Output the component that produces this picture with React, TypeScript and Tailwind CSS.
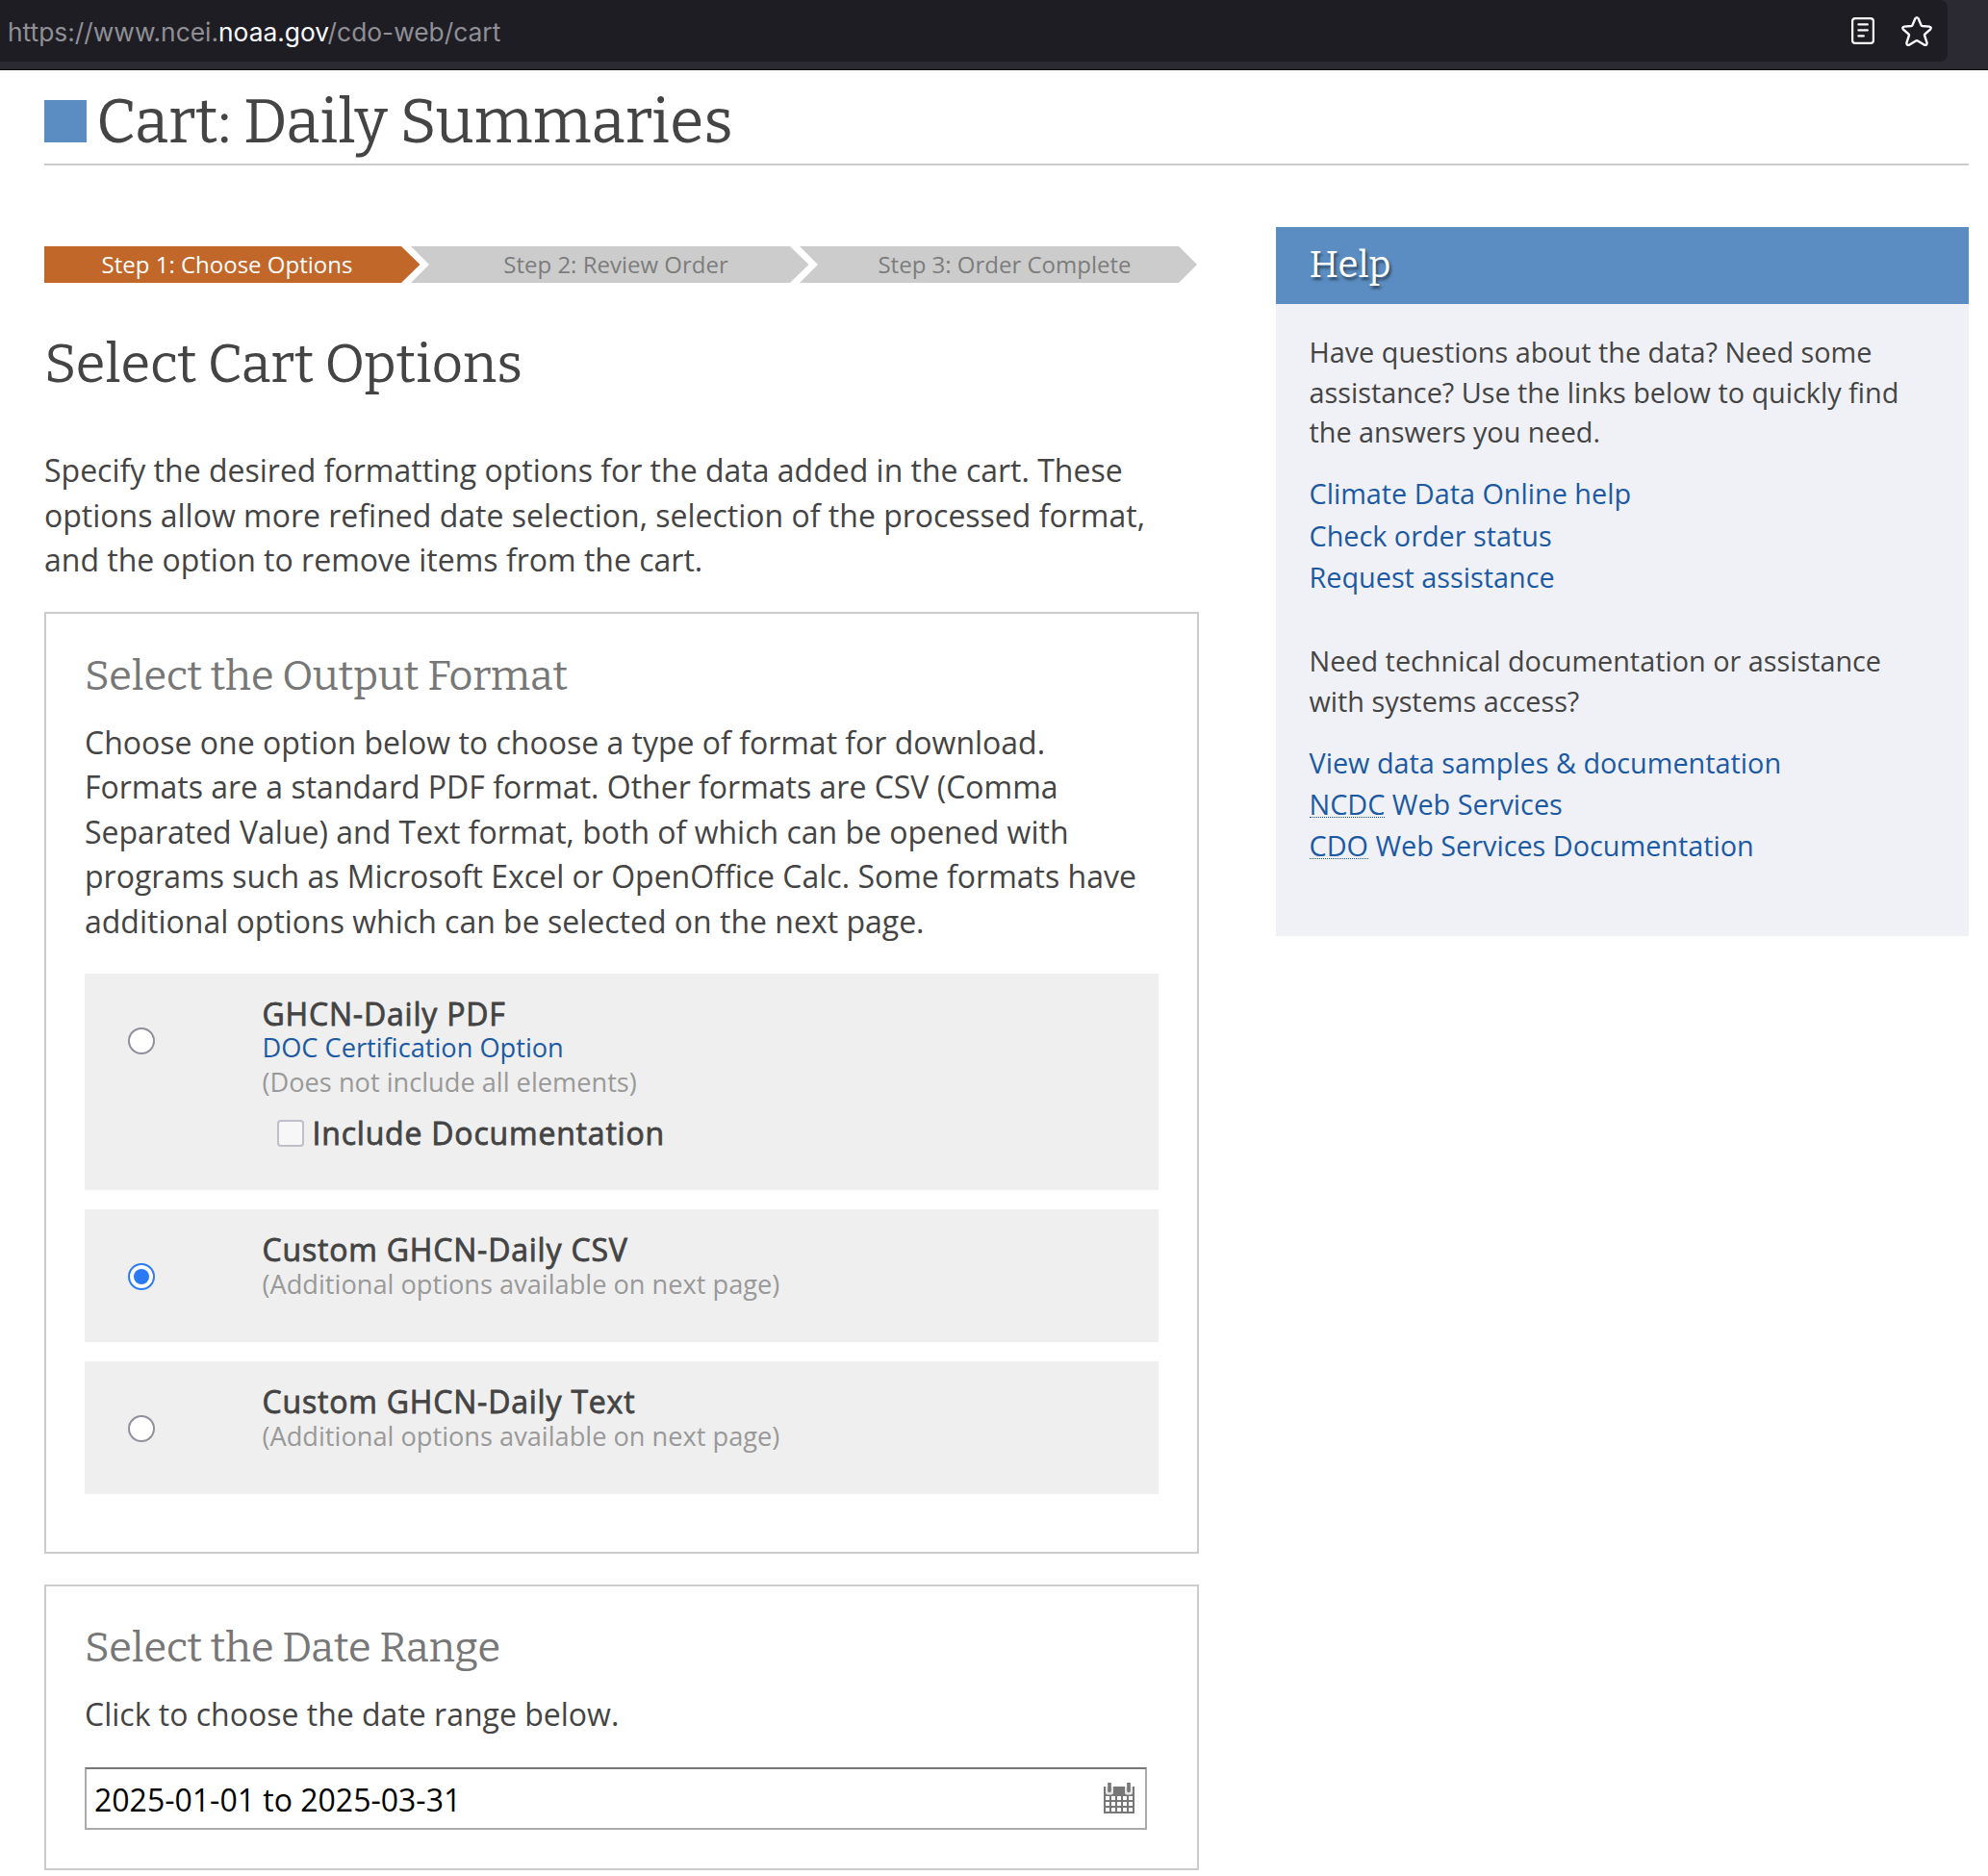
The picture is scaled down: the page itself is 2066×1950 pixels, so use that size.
import { ReactNode } from "react";

const serif = "font-['Bitter','DejaVu_Serif_Condensed',serif]";
const strong = "text-[32px] leading-[40px] tracking-[0.8px] text-[#444] [-webkit-text-stroke:0.8px_#444]";

function ReaderIcon() {
  return (
    <svg width="24" height="28" viewBox="0 0 24 28" fill="none" stroke="#fbfbfe" strokeWidth="2.2" strokeLinecap="round">
      <rect x="1.1" y="1.1" width="21.8" height="25.8" rx="3" />
      <path d="M7.4 7.4h9.4M7.4 13.4h9.4M7.4 19.4h5.4" />
    </svg>
  );
}

function StarIcon() {
  return (
    <svg width="32" height="32" viewBox="0 0 32 32" fill="none" stroke="#fbfbfe" strokeWidth="2.4" strokeLinejoin="round">
      <path d="M14.4 2.3Q16 .2 17.6 2.3L20.6 9.3Q20.9 9.9 21.6 10L29 10.6Q31.8 11.3 30 13.7L24.4 18.5Q23.9 19 24 19.7L26.6 27.6Q26.7 30.3 24 29.8L16.6 25.3Q16 25 15.4 25.3L8 29.8Q5.3 30.3 5.4 27.6L8 19.7Q8.1 19 7.6 18.5L2 13.7Q.2 11.3 3 10.6L10.4 10Q11.1 9.9 11.4 9.3Z" />
    </svg>
  );
}

function CalendarIcon() {
  const cols = [1, 4, 7, 10, 13];
  const rows = [7, 10, 13];
  return (
    <svg width="32" height="32" viewBox="0 0 16 16">
      <path d="M0 2h16v14H0z" fill="#777" />
      <path d="M1 2h4v3.2q0 1-1 1H2q-1 0-1-1zM11 2h4v3.2q0 1-1 1h-2q-1 0-1-1z" fill="#e6e6e6" />
      <path d="M2.1 0h1.8v4.2q0 .9-.9.9t-.9-.9zM12.1 0h1.8v4.2q0 .9-.9.9t-.9-.9z" fill="#777" />
      {rows.map((y) => cols.map((x) => <rect key={`${x}-${y}`} x={x} y={y} width="2" height="2" fill="#fff" />))}
    </svg>
  );
}

function Radio({ checked }: { checked?: boolean }) {
  return (
    <span
      className={
        "flex size-7 items-center justify-center rounded-full border-2 bg-white " +
        (checked ? "border-[#2a7af6]" : "border-[#8f8f9d]")
      }
    >
      {checked && <span className="size-4 rounded-full bg-[#2a7af6]" />}
    </span>
  );
}

function Option({ title, checked, height, children }: { title: string; checked?: boolean; height: string; children: ReactNode }) {
  return (
    <div className={"flex bg-[#efefef] " + height}>
      <div className="w-[184.5px] shrink-0 pt-[56px] pl-[45px]">
        <Radio checked={checked} />
      </div>
      <div className="pt-[22px]">
        <div className={strong}>{title}</div>
        <div className="-mt-[2px]">{children}</div>
      </div>
    </div>
  );
}

function Note({ children }: { children: ReactNode }) {
  return <div className="text-[27.2px] leading-[36px] text-[#999]">{children}</div>;
}

function Abbr({ children }: { children: ReactNode }) {
  return <span className="inline-block h-[36px] border-b border-dotted border-[#1b5aa3] leading-[43.2px]">{children}</span>;
}

function Links({ children }: { children: ReactNode }) {
  return <ul className="leading-[43.2px] text-[#1b5aa3]">{children}</ul>;
}

export default function App() {
  return (
    <div className="h-[1950px] w-[2066px] overflow-hidden bg-white font-['Open_Sans','Noto_Sans',sans-serif] text-[#444]">
      <header className="h-[73px] border-b border-[#0c0c0d] bg-[#2b2a33]">
        <div className="flex h-16 w-[2024px] items-start justify-between rounded-r-lg bg-[#1e1d24] pr-4 pl-2">
          <div className="pt-[17px] font-['Inter','Roboto',sans-serif] text-[26.35px] leading-[32px] text-[#8f8f94]">
            https://www.ncei.<span className="text-[#fbfbfe]">noaa.gov</span>/cdo-web/cart
          </div>
          <div className="flex gap-7 pt-[17px]">
            <span className="pt-px"><ReaderIcon /></span>
            <StarIcon />
          </div>
        </div>
      </header>

      <div className="pr-5 pl-[46px]">
        <div className="flex h-[99px] gap-[10px] border-b-2 border-[#ccc]">
          <span className="mt-[31px] size-11 bg-[#5b8dc2]" />
          <h1 className={serif + " mt-[22px] text-[64px] leading-[64px]"}>Cart: Daily Summaries</h1>
        </div>

        <div className="flex items-start justify-between pt-[64px]">
          <main className="w-[1200px] pt-5">
            <ol className="flex h-[38px] text-center text-[24px] leading-[38px] text-[#7d7d7d]">
              <li className="w-[391px] bg-[#c16729] pr-[11px] text-white [clip-path:polygon(0_0,371px_0,390.5px_50%,371px_100%,0_100%)]">
                Step 1: Choose Options
              </li>
              <li className="-ml-[10px] w-[414px] bg-[#ccc] pl-[12px] [clip-path:polygon(0_0,394px_0,413.5px_50%,394px_100%,0_100%,19px_50%)]">
                Step 2: Review Order
              </li>
              <li className="-ml-[10px] w-[413px] bg-[#ccc] pl-[13px] [clip-path:polygon(0_0,394px_0,100%_50%,394px_100%,0_100%,19px_50%)]">
                Step 3: Order Complete
              </li>
            </ol>

            <h2 className={serif + " mt-[57px] text-[56px] leading-[56px]"}>Select Cart Options</h2>
            <p className="mt-[59px] text-[32px] leading-[46.5px]">
              Specify the desired formatting options for the data added in the cart. These
              <br />
              options allow more refined date selection, selection of the processed format,
              <br />
              and the option to remove items from the cart.
            </p>

            <section className="mt-[30.5px] h-[979px] border-2 border-[#ccc] px-10">
              <h3 className={serif + " mt-[43px] text-[43.2px] leading-[44px] text-[#777]"}>Select the Output Format</h3>
              <p className="mt-[23.5px] text-[32px] leading-[46.5px] whitespace-nowrap">
                Choose one option below to choose a type of format for download.
                <br />
                Formats are a standard PDF format. Other formats are CSV (Comma
                <br />
                Separated Value) and Text format, both of which can be opened with
                <br />
                programs such as Microsoft Excel or OpenOffice Calc. Some formats have
                <br />
                additional options which can be selected on the next page.
              </p>
              <div className="mt-[31px] flex flex-col gap-5">
                <Option title="GHCN-Daily PDF" height="h-[225px]">
                  <div className="-mt-[3px] text-[27.2px] leading-[36px] text-[#1b5aa3]">DOC Certification Option</div>
                  <Note>(Does not include all elements)</Note>
                  <div className="mt-[15px] flex items-center gap-[8.5px] pl-[15.5px]">
                    <span className="size-7 rounded-[4px] border-2 border-[#bfbfc9] bg-[#f7f7f7]" />
                    <span className={strong}>Include Documentation</span>
                  </div>
                </Option>
                <Option title="Custom GHCN-Daily CSV" checked height="h-[138px]">
                  <Note>(Additional options available on next page)</Note>
                </Option>
                <Option title="Custom GHCN-Daily Text" height="h-[138px]">
                  <Note>(Additional options available on next page)</Note>
                </Option>
              </div>
            </section>

            <section className="mt-8 h-[297px] border-2 border-[#ccc] px-10">
              <h3 className={serif + " mt-[42px] text-[43.2px] leading-[44px] text-[#777]"}>Select the Date Range</h3>
              <p className="mt-[24px] text-[32px] leading-[46px]">Click to choose the date range below.</p>
              <div className="mt-[32px] flex h-[65px] w-[1104px] justify-between border-2 border-[#ababab] border-t-[#767676] pr-[11px] pl-2">
                <span className="pt-[7.5px] text-[32px] leading-[48px] text-black">2025-01-01 to 2025-03-31</span>
                <span className="pt-[14px]"><CalendarIcon /></span>
              </div>
            </section>
          </main>

          <aside className="h-[737px] w-[720px] bg-[#f0f1f6] text-[28.8px]">
            <h2 className={serif + " h-20 bg-[#5b8dc2] pt-px pl-[34.5px] text-[38.4px] leading-[76px] text-white [text-shadow:2px_3px_3px_rgba(0,0,0,0.5)]"}>
              Help
            </h2>
            <div className="pt-[29px] pl-[34.5px]">
              <p className="leading-[41.5px]">
                Have questions about the data? Need some
                <br />
                assistance? Use the links below to quickly find
                <br />
                the answers you need.
              </p>
              <div className="mt-[21.8px]">
                <Links>
                  <li>Climate Data Online help</li>
                  <li>Check order status</li>
                  <li>Request assistance</li>
                </Links>
              </div>
              <p className="mt-[45.5px] leading-[41.76px]">
                Need technical documentation or assistance
                <br />
                with systems access?
              </p>
              <div className="mt-[21px]">
                <Links>
                  <li>View data samples &amp; documentation</li>
                  <li className="h-[43.2px]"><Abbr>NCDC</Abbr> Web Services</li>
                  <li className="h-[43.2px]"><Abbr>CDO</Abbr> Web Services Documentation</li>
                </Links>
              </div>
            </div>
          </aside>
        </div>
      </div>
    </div>
  );
}
